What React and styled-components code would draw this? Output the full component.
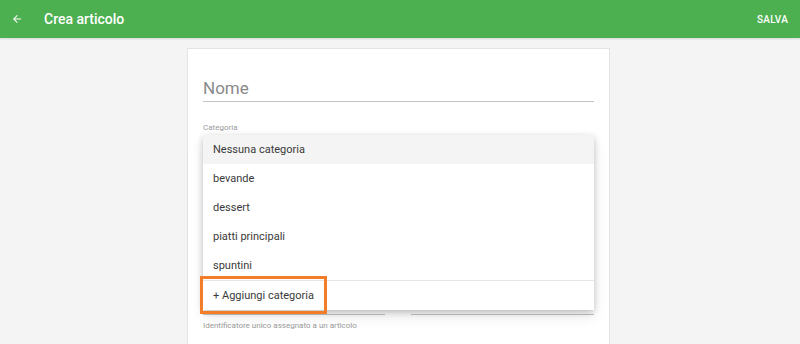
import React from "react";
import styled, { createGlobalStyle } from "styled-components";

const GlobalStyle = createGlobalStyle`
  html, body {
    margin: 0;
    padding: 0;
    background: #f4f4f4;
    font-family: Roboto, "Liberation Sans", sans-serif;
    overflow: hidden;
  }
`;

const categories = ["Nessuna categoria", "bevande", "dessert", "piatti principali", "spuntini"];

const App = () => {
  return (
    <Page>
      <GlobalStyle />
      <AppBar>
        <BackButton>
          <svg width="12" height="12" viewBox="0 0 24 24">
            <path d="M20 11H7.83l5.59-5.59L12 4l-8 8 8 8 1.41-1.41L7.83 13H20v-2z" fill="#fff" />
          </svg>
        </BackButton>
        <Title>Crea articolo</Title>
        <SaveButton>SALVA</SaveButton>
      </AppBar>
      <Main>
        <Card>
          <NameField>Nome</NameField>
          <Label>Categoria</Label>
          <Underline height={20} />
          <Underline height={85} />
          <FieldRow>
            <Underline height={74} grow />
            <Underline height={74} grow />
          </FieldRow>
          <Helper>Identificatore unico assegnato a un articolo</Helper>

          <Menu>
            {categories.map((c, i) => (
              <MenuItem key={c} selected={i === 0}>{c}</MenuItem>
            ))}
            <AddItem>
              + Aggiungi categoria
              <Highlight />
            </AddItem>
          </Menu>
        </Card>
      </Main>
    </Page>
  );
};

const Page = styled.div`
  width: 800px;
  height: 344px;
  background: #f4f4f4;
`;

const AppBar = styled.div`
  height: 38px;
  background: #4caf50;
  display: flex;
  align-items: center;
  padding: 0 12px 0 10px;
  box-sizing: border-box;
  color: #fff;
  box-shadow: 0 1px 2px rgba(0, 0, 0, 0.12);
`;

const BackButton = styled.div`
  width: 14px;
  height: 14px;
  display: flex;
  align-items: center;
  justify-content: center;
  margin-right: 20px;
`;

const Title = styled.div`
  font-size: 14px;
  font-weight: 500;
  flex: 1;
`;

const SaveButton = styled.div`
  font-size: 10px;
  font-weight: 500;
  letter-spacing: 0.2px;
`;

const Main = styled.div`
  display: flex;
  justify-content: center;
  padding-top: 10px;
`;

const Card = styled.div`
  position: relative;
  width: 423px;
  box-sizing: border-box;
  background: #fff;
  border: 1px solid #e3e3e3;
  padding: 28px 15px 0 15px;
  height: 300px;
  margin-right: 3px;
`;

const NameField = styled.div`
  font-size: 17px;
  color: #8a8a8a;
  height: 24px;
  line-height: 22px;
  border-bottom: 1px solid #c4c4c4;
`;

const Label = styled.div`
  font-size: 8px;
  color: #9a9a9a;
  margin-top: 21px;
  line-height: 10px;
`;

const Underline = styled.div`
  flex: ${(p) => (p.grow ? "0 0 182px" : "none")};
  height: ${(p) => p.height}px;
  border-bottom: 1px solid #c4c4c4;
`;

const FieldRow = styled.div`
  display: flex;
  justify-content: space-between;
  & > div:last-child {
    flex: 0 0 183px;
  }
`;

const Helper = styled.div`
  font-size: 8px;
  color: #9a9a9a;
  margin-top: 6px;
`;

const Menu = styled.div`
  position: absolute;
  top: 86px;
  left: 15px;
  width: 391px;
  background: #fff;
  box-shadow: 0 2px 6px rgba(0, 0, 0, 0.2), 0 6px 14px rgba(0, 0, 0, 0.1);
  border-radius: 2px;
`;

const MenuItem = styled.div`
  height: 29px;
  display: flex;
  align-items: center;
  padding-left: 10px;
  font-size: 11px;
  color: #3a3a3a;
  background: ${(p) => (p.selected ? "#f4f4f4" : "#fff")};
`;

const AddItem = styled(MenuItem)`
  position: relative;
  border-top: 1px solid #e6e6e6;
`;

const Highlight = styled.div`
  position: absolute;
  left: -3px;
  top: -5px;
  width: 121px;
  height: 32px;
  border: 3px solid #f47d2a;
`;

export default App;
